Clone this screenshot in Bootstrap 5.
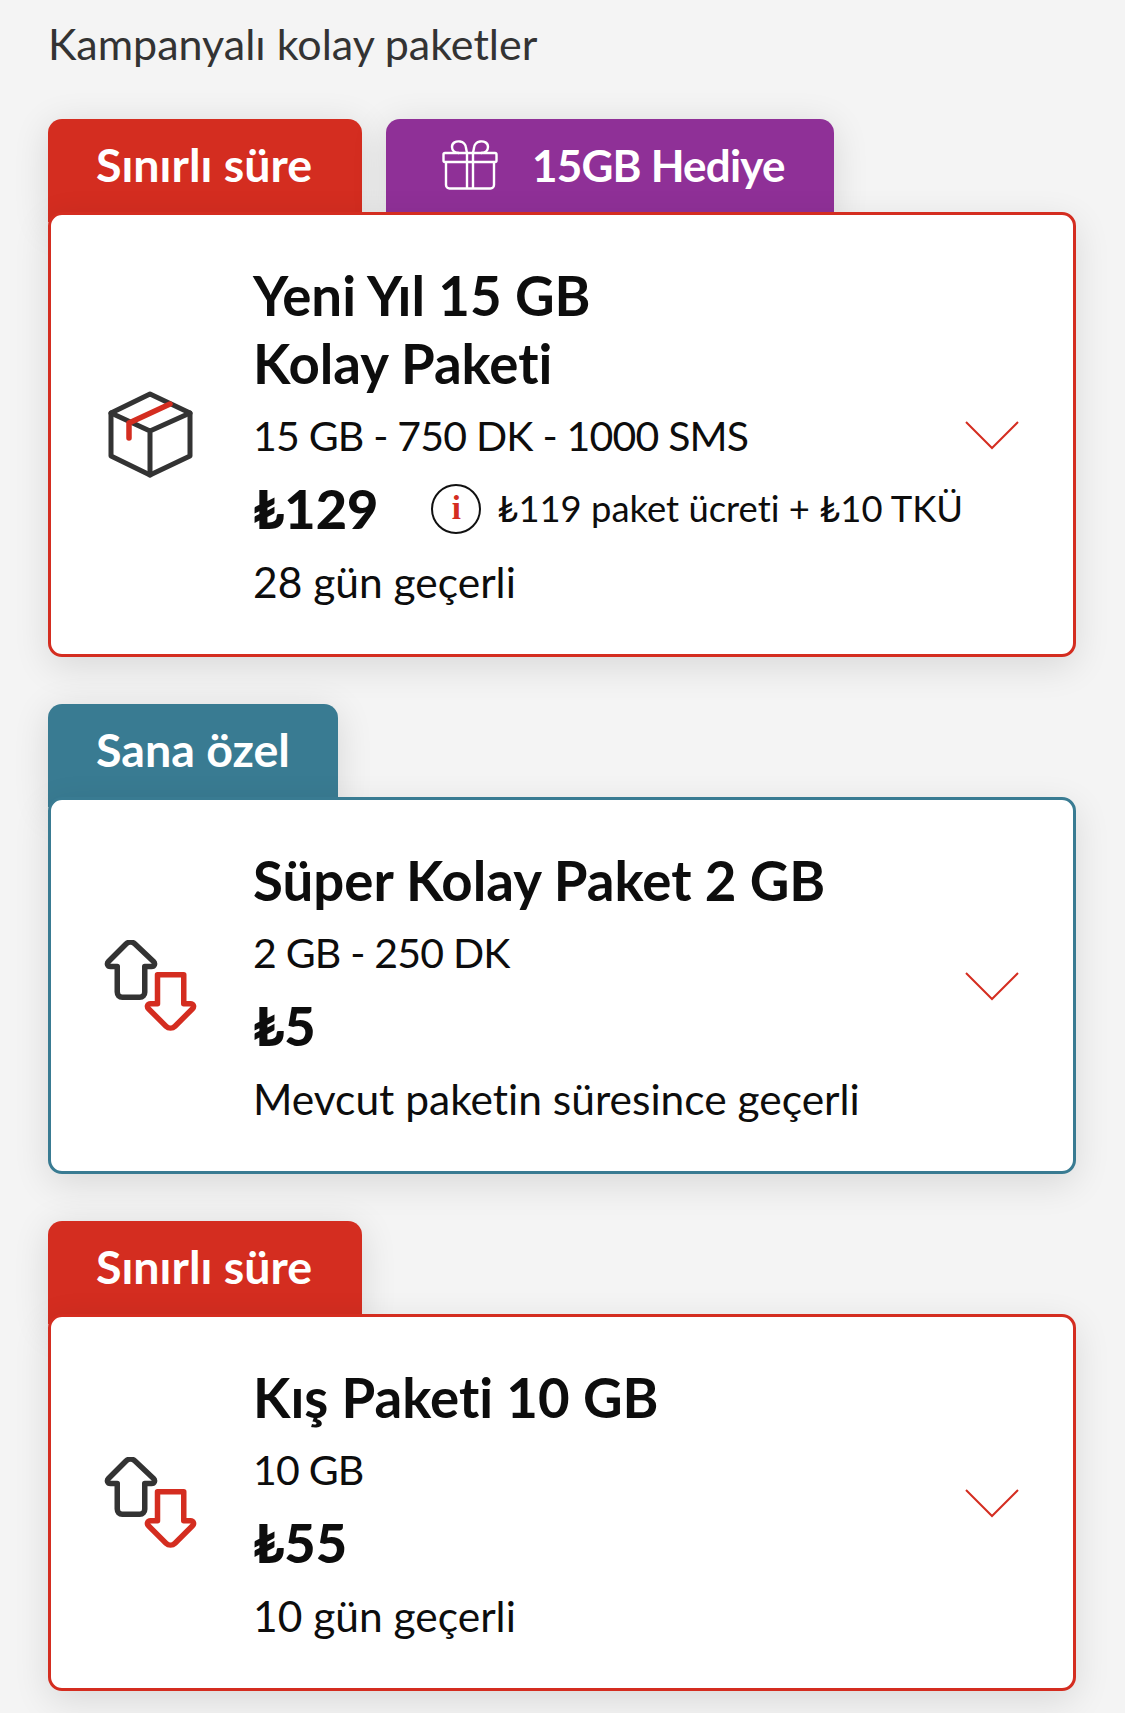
<!DOCTYPE html>
<html lang="tr">
<head>
<meta charset="utf-8">
<title>Kampanyalı kolay paketler</title>
<link href="https://cdn.jsdelivr.net/npm/bootstrap@5.3.0/dist/css/bootstrap.min.css" rel="stylesheet">
<style>
html,body{background:#f4f4f4;}
body{font-family:"Lato","Noto Sans",sans-serif;color:#0d0d0d;height:1713px;overflow:hidden;font-variant-ligatures:none;}
.page-wrap{padding:0 49px 0 48px;}
.page-heading{font-size:43px;line-height:88px;color:#333;font-weight:400;margin:0 0 31px;}
.offer{margin-bottom:47px;}
.tab-row{gap:24px;}
.offer-tab{height:103px;margin-bottom:-10px;padding:0 50px 12px 48px;border-radius:14px 14px 0 0;color:#fff;font-size:46.6px;font-weight:700;box-shadow:0 6px 36px rgba(0,0,0,.12);}
.tab-red{background:#d42d20;}
.tab-purple{background:#8f3097;padding-left:56px;padding-right:49px;gap:34px;}
.tab-purple span{font-size:44px;letter-spacing:-.8px;}
.tab-teal{background:#397b92;padding-right:48px;}
.offer-card{position:relative;background:#fff;border:3px solid #d42d20;border-radius:14px;padding:46px 54px 36px 0;box-shadow:0 10px 36px rgba(0,0,0,.11);}
.offer-card.teal-line{border-color:#397b92;}
.icon-slot{width:202px;flex:none;padding-right:3px;margin-bottom:10px;}
.text-col{min-width:0;}
.title-line{font-size:54.6px;line-height:68px;font-weight:700;margin:0 0 2px;}
.row-line{font-size:42.5px;line-height:73px;}
.row-line.digits{font-size:41px;letter-spacing:-.8px;}
.price{font-size:54px;font-weight:900;line-height:73px;}
.price-note{font-size:36.4px;line-height:73px;margin-left:-3px;}
.info-dot{width:50px;height:50px;flex:none;border:2.5px solid #111;border-radius:50%;margin:0 19px 0 53px;color:#d42d20;font-family:"Liberation Serif",serif;font-weight:700;font-size:33px;line-height:1;}
.chev{flex:none;margin-bottom:8px;}
</style>
</head>
<body>
<main class="page-wrap">
<h1 class="page-heading">Kampanyalı kolay paketler</h1>

<section class="offer">
  <div class="d-flex tab-row">
    <div class="offer-tab tab-red d-flex align-items-center">Sınırlı süre</div>
    <div class="offer-tab tab-purple d-flex align-items-center">
      <svg width="56" height="50" viewBox="0 0 56 50" fill="none" stroke="#fff" stroke-width="2.4" stroke-linejoin="round" aria-hidden="true">
        <rect x="1.5" y="13" width="53" height="9" rx="1.5"/>
        <path d="M4 22v23a3.5 3.5 0 0 0 3.5 3.5h41a3.500 3.500 0 0 0 3.500-3.500V22"/>
        <path d="M25 13v35.500M31 13v35.500"/>
        <path d="M25 13l-1-5a7 7 0 0 0-6-6.500c-4-.5-8 1-8 5.500 0 4 3 6 7 6M31 13l1-5a7 7 0 0 1 6-6.500c4-.5 8 1 8 5.500 0 4-3 6-7 6"/>
      </svg>
      <span>15GB Hediye</span>
    </div>
  </div>
  <div class="offer-card d-flex align-items-center">
    <div class="icon-slot d-flex justify-content-center">
      <svg width="88" height="88" viewBox="0 0 88 88" fill="none" stroke="#333" stroke-width="5" stroke-linejoin="round" stroke-linecap="round" aria-hidden="true">
        <path d="M43 3 4 22v43l39 19 40-19V22Z"/>
        <path d="M4 22l39 18 40-18M43 40v44"/>
        <path d="M22 32 63 13M22 32v15" stroke="#d42d20" stroke-width="5.500"/>
      </svg>
    </div>
    <div class="flex-grow-1 text-col">
      <h2 class="title-line">Yeni Yıl 15 GB<br>Kolay Paketi</h2>
      <div class="row-line digits">15 GB - 750 DK - 1000 SMS</div>
      <div class="d-flex align-items-center text-nowrap">
        <span class="price">₺129</span>
        <span class="info-dot d-inline-flex align-items-center justify-content-center">i</span>
        <span class="price-note">₺119 paket ücreti + ₺10 TKÜ</span>
      </div>
      <div class="row-line">28 gün geçerli</div>
    </div>
    <svg class="chev" width="54" height="29" viewBox="0 0 54 29" fill="none" stroke="#d42d20" stroke-width="2" aria-hidden="true"><path d="M1 1l26 26L53 1"/></svg>
  </div>
</section>

<section class="offer">
  <div class="d-flex tab-row">
    <div class="offer-tab tab-teal d-flex align-items-center">Sana özel</div>
  </div>
  <div class="offer-card teal-line d-flex align-items-center">
    <div class="icon-slot d-flex justify-content-center">
      <svg width="94" height="92" viewBox="0 0 94 92" fill="none" stroke-width="5.500" stroke-linejoin="round" stroke-linecap="round" aria-hidden="true">
        <path d="M22 4 4.500 21.500c-2 2-1 5 2 5h6.750V52c0 3 2 5.250 5 5.250h17.500c3 0 5-2 5-5V26.500h6.750c3 0 4-3 2-5L31 4c-2.500-2.400-6.500-2.400-9 0Z" stroke="#333"/>
        <path d="M53.500 34.750H79.750V63.750h6.750c3 0 4 3 2 5L71 86.200c-2.500 2.400-6.500 2.400-9 0L44.500 68.750c-2-2-1-5 2-5h7Z" stroke="#d42d20"/>
      </svg>
    </div>
    <div class="flex-grow-1 text-col">
      <h2 class="title-line">Süper Kolay Paket 2 GB</h2>
      <div class="row-line digits">2 GB - 250 DK</div>
      <div class="price">₺5</div>
      <div class="row-line">Mevcut paketin süresince geçerli</div>
    </div>
    <svg class="chev" width="54" height="29" viewBox="0 0 54 29" fill="none" stroke="#d42d20" stroke-width="2" aria-hidden="true"><path d="M1 1l26 26L53 1"/></svg>
  </div>
</section>

<section class="offer">
  <div class="d-flex tab-row">
    <div class="offer-tab tab-red d-flex align-items-center">Sınırlı süre</div>
  </div>
  <div class="offer-card d-flex align-items-center">
    <div class="icon-slot d-flex justify-content-center">
      <svg width="94" height="92" viewBox="0 0 94 92" fill="none" stroke-width="5.500" stroke-linejoin="round" stroke-linecap="round" aria-hidden="true">
        <path d="M22 4 4.500 21.500c-2 2-1 5 2 5h6.750V52c0 3 2 5.250 5 5.250h17.500c3 0 5-2 5-5V26.500h6.750c3 0 4-3 2-5L31 4c-2.500-2.400-6.500-2.400-9 0Z" stroke="#333"/>
        <path d="M53.500 34.750H79.750V63.750h6.750c3 0 4 3 2 5L71 86.200c-2.500 2.400-6.500 2.400-9 0L44.500 68.750c-2-2-1-5 2-5h7Z" stroke="#d42d20"/>
      </svg>
    </div>
    <div class="flex-grow-1 text-col">
      <h2 class="title-line">Kış Paketi 10 GB</h2>
      <div class="row-line digits">10 GB</div>
      <div class="price">₺55</div>
      <div class="row-line">10 gün geçerli</div>
    </div>
    <svg class="chev" width="54" height="29" viewBox="0 0 54 29" fill="none" stroke="#d42d20" stroke-width="2" aria-hidden="true"><path d="M1 1l26 26L53 1"/></svg>
  </div>
</section>
</main>
<script src="https://cdn.jsdelivr.net/npm/bootstrap@5.3.0/dist/js/bootstrap.bundle.min.js"></script>
</body>
</html>
